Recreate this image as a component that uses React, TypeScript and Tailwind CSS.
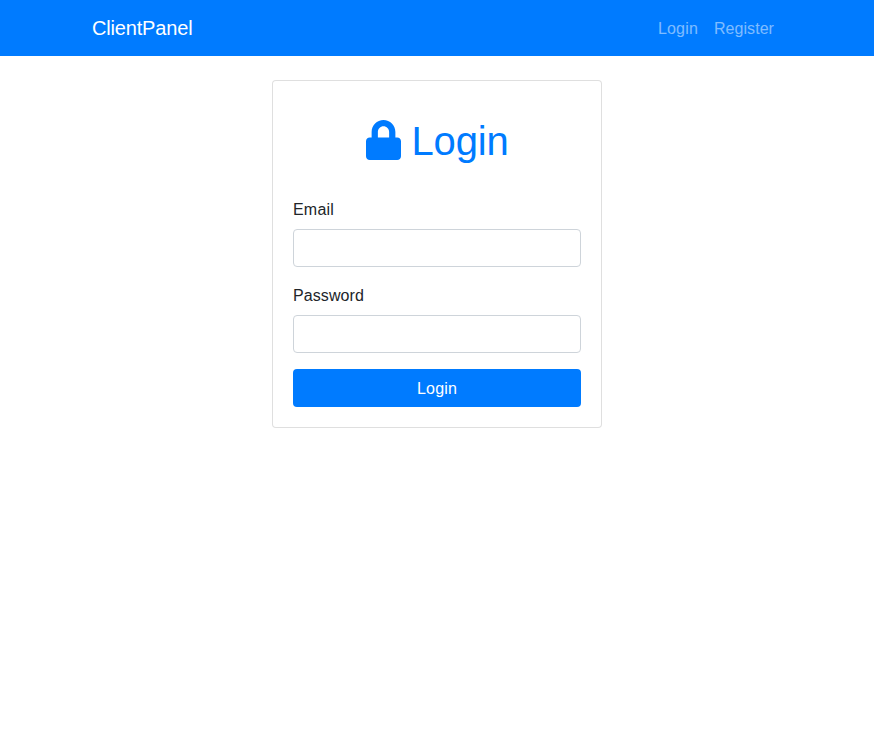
import React from "react";
import { FaLock } from "react-icons/fa";

function Navbar() {
  return (
    <nav className="flex h-14 items-center bg-[#007bff] px-4">
      <div className="mx-auto flex w-[690px] items-center justify-between">
        <a href="#" className="text-xl leading-[30px] tracking-[-0.17px] text-white">ClientPanel</a>
        <ul className="flex">
          <li><a href="#" className="block px-2 pt-[9px] pb-[7px] leading-6 tracking-[0.18px] text-white/50">Login</a></li>
          <li><a href="#" className="block px-2 pt-[9px] pb-[7px] leading-6 tracking-[0.05px] text-white/50">Register</a></li>
        </ul>
      </div>
    </nav>
  );
}

function Field({ id, label, type, tracking }: { id: string; label: string; type: string; tracking: string }) {
  return (
    <div className="mb-4">
      <label htmlFor={id} className={`mb-1.5 block leading-[26px] ${tracking}`}>{label}</label>
      <input
        id={id}
        type={type}
        className="block h-[38px] w-full rounded border border-[#ced4da] bg-white px-3 py-1.5 outline-none"
      />
    </div>
  );
}

export default function App() {
  return (
    <div className="min-h-screen bg-white font-['Liberation_Sans',Arial,sans-serif] text-base text-[#212529]">
      <Navbar />
      <main className="mx-auto mt-6 w-[330px] rounded border border-black/[0.125] bg-white p-5">
        <h1 className="mt-4 mb-8 flex h-12 items-center justify-center text-[40px] leading-[48px] tracking-[-0.18px] text-[#007bff]">
          <FaLock className="mr-[11px] mb-0.5 h-10 w-[35px]" />
          <span>Login</span>
        </h1>
        <form onSubmit={(e) => e.preventDefault()}>
          <Field id="email" label="Email" type="email" tracking="tracking-[0.2px]" />
          <Field id="password" label="Password" type="password" tracking="tracking-[0.1px]" />
          <button type="submit" className="block h-[38px] w-full rounded bg-[#007bff] pt-0.5 leading-6 tracking-[0.18px] text-white">
            Login
          </button>
        </form>
      </main>
    </div>
  );
}
